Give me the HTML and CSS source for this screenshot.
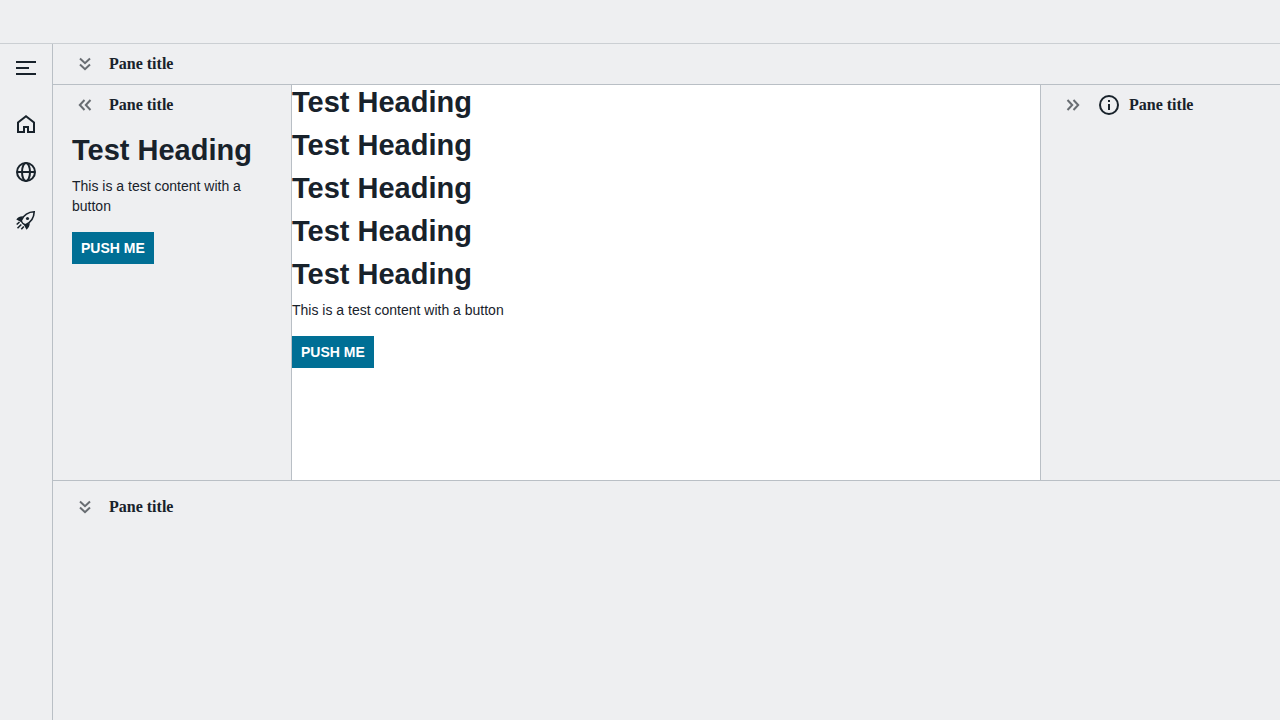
FILE: index.html
```html
<!DOCTYPE html>
<html lang="en">
<head>
<meta charset="utf-8">
<meta name="viewport" content="width=device-width, initial-scale=1">
<title>Panes</title>
<link rel="stylesheet" href="styles.css">
</head>
<body>
<svg class="defs" aria-hidden="true">
  <symbol id="double-down" viewBox="0 0 24 24"><path d="M7 6.500l5 4.700 5-4.700M7 12.500l5 4.700 5-4.700" /></symbol>
  <symbol id="double-left" viewBox="0 0 24 24"><path d="M11.500 7l-4.700 5 4.700 5M17.500 7l-4.700 5 4.700 5" /></symbol>
  <symbol id="double-right" viewBox="0 0 24 24"><path d="M6.500 7l4.700 5-4.700 5M12.500 7l4.700 5-4.700 5" /></symbol>
</svg>
<div class="app">
  <header class="app-header"></header>
  <div class="app-body">
    <nav class="menu" aria-label="Main">
      <button class="icon-button menu-toggle" type="button" aria-label="Toggle menu">
        <svg class="icon" viewBox="0 0 24 24"><path d="M2 6h20M2 12h13M2 18h20" /></svg>
      </button>
      <button class="icon-button" type="button" aria-label="Home">
        <svg class="icon" viewBox="0 0 24 24"><path d="M4 20V10.500L12 4.300l8 6.200V20h-6v-5h-4v5z" /></svg>
      </button>
      <button class="icon-button" type="button" aria-label="Global">
        <svg class="icon" viewBox="0 0 24 24"><circle cx="12" cy="12" r="9" /><ellipse cx="12" cy="12" rx="4" ry="9" /><path d="M3 12h18" /></svg>
      </button>
      <button class="icon-button" type="button" aria-label="Launch">
        <svg class="icon" viewBox="0 0 24 24">
          <path class="hull" d="M20.200 3.800C14.500 4 10 6.500 7.300 12.300C7.500 14.500 9.500 16.500 11.700 16.700C17.500 14 20 9.500 20.200 3.800z" />
          <path class="solid" d="M9 8.300C6 8.200 4 9.300 2.300 11.500L7 14zM15.700 15c.1 3-1 5-3.200 6.700L10 17z" />
          <circle class="solid" cx="13.500" cy="10.500" r="1.600" />
          <path class="flame" d="M5.500 14L2.700 16.500M7.300 16.500L3.500 20.300M9.800 18.500L7.300 21.300" />
        </svg>
      </button>
    </nav>
    <div class="layout">
      <section class="pane pane-top">
        <div class="pane-header">
          <button class="icon-button collapse" type="button" aria-label="Collapse top pane"><svg class="icon"><use href="#double-down" /></svg></button>
          <span class="pane-title">Pane title</span>
        </div>
      </section>
      <div class="middle">
        <section class="pane pane-left">
          <div class="pane-header">
            <button class="icon-button collapse" type="button" aria-label="Collapse left pane"><svg class="icon"><use href="#double-left" /></svg></button>
            <span class="pane-title">Pane title</span>
          </div>
          <div class="pane-content">
            <h1 class="heading">Test Heading</h1>
            <p class="text">This is a test content with a button</p>
            <button class="primary" type="button">PUSH ME</button>
          </div>
        </section>
        <main class="content">
          <h1 class="heading">Test Heading</h1>
          <h1 class="heading">Test Heading</h1>
          <h1 class="heading">Test Heading</h1>
          <h1 class="heading">Test Heading</h1>
          <h1 class="heading">Test Heading</h1>
          <p class="text">This is a test content with a button</p>
          <button class="primary" type="button">PUSH ME</button>
        </main>
        <section class="pane pane-right">
          <div class="pane-header">
            <button class="icon-button collapse" type="button" aria-label="Collapse right pane"><svg class="icon"><use href="#double-right" /></svg></button>
            <span class="pane-label">
              <svg class="icon" viewBox="0 0 24 24" aria-hidden="true"><circle cx="12" cy="12" r="9" /><path d="M12 11v6M12 7v2" /></svg>
              <span class="pane-title">Pane title</span>
            </span>
          </div>
        </section>
      </div>
      <section class="pane pane-bottom">
        <div class="pane-header">
          <button class="icon-button collapse" type="button" aria-label="Collapse bottom pane"><svg class="icon"><use href="#double-down" /></svg></button>
          <span class="pane-title">Pane title</span>
        </div>
      </section>
    </div>
  </div>
</div>
</body>
</html>
```
FILE: styles.css
```css
*, *::before, *::after {
  box-sizing: border-box;
}

body {
  margin: 0;
  background: #eeeff1;
  color: #18222b;
  font-family: "Liberation Serif", "Times New Roman", serif;
  font-size: 16px;
}

.defs {
  display: none;
}

.app {
  display: flex;
  flex-direction: column;
  min-height: 100vh;
}

.app-header {
  height: 44px;
  border-bottom: 1px solid #cbcfd3;
}

.app-body {
  display: flex;
  flex: 1;
}

.menu {
  display: flex;
  flex-direction: column;
  align-items: center;
  gap: 16px;
  flex: 0 0 53px;
  padding-top: 8px;
  border-right: 1px solid #b9bfc5;
}

.menu-toggle {
  margin-bottom: 8px;
}

.icon-button {
  display: flex;
  align-items: center;
  justify-content: center;
  width: 32px;
  height: 32px;
  padding: 0;
  border: 0;
  background: none;
  color: inherit;
  cursor: pointer;
}

.icon {
  display: block;
  width: 24px;
  height: 24px;
  fill: none;
  stroke: currentColor;
  stroke-width: 2;
}

.solid {
  fill: currentColor;
  stroke: none;
}

.hull,
.flame {
  stroke-width: 1.6;
}

.layout {
  display: flex;
  flex-direction: column;
  flex: 1;
  min-width: 0;
}

.pane-top {
  border-bottom: 1px solid #b9bfc5;
}

.middle {
  display: flex;
  flex: 1;
}

.pane-left {
  flex: 0 0 239px;
  border-right: 1px solid #b9bfc5;
}

.pane-right {
  flex: 0 0 240px;
  border-left: 1px solid #b9bfc5;
}

.pane-bottom {
  flex: 0 0 240px;
  padding-top: 6px;
  border-top: 1px solid #b9bfc5;
}

.pane-header {
  display: flex;
  align-items: center;
  gap: 8px;
  height: 40px;
  padding: 0 16px;
}

.collapse {
  color: #686d72;
}

.pane-label {
  display: flex;
  align-items: center;
  gap: 8px;
}

.pane-title {
  font-weight: 700;
}

.pane-content {
  padding: 8px 19px;
}

.content {
  flex: 1;
  min-width: 0;
  background: #fff;
}

.heading {
  margin: 0 0 8px;
  font: 700 29px/35px "Liberation Sans", Arial, sans-serif;
}

.text {
  margin: 0 0 16px;
  font: 14px/20px "Liberation Sans", Arial, sans-serif;
}

.primary {
  height: 32px;
  padding: 0 9px;
  border: 0;
  background: #006f95;
  color: #fff;
  font: 700 14px/20px "Liberation Sans", Arial, sans-serif;
  cursor: pointer;
}
```
